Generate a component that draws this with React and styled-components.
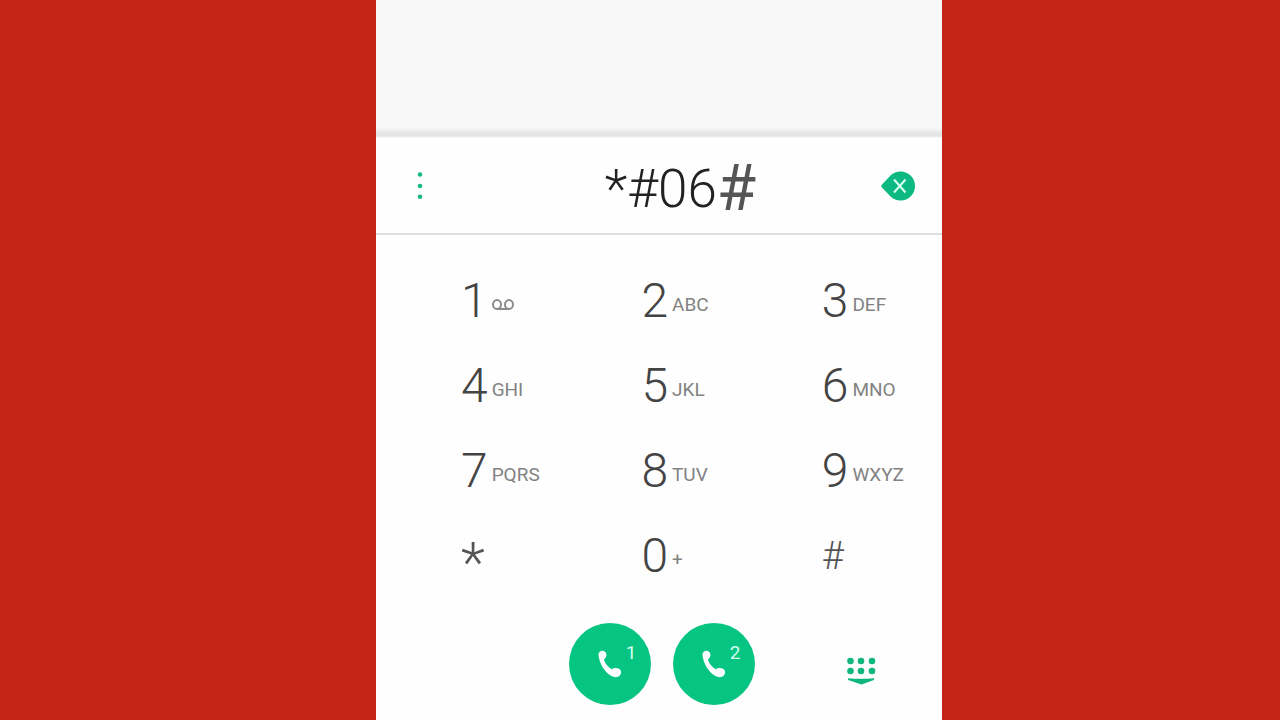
import React from "react";
import styled, { createGlobalStyle } from "styled-components";

const GlobalStyle = createGlobalStyle`
  * { box-sizing: border-box; }
  body { margin: 0; background: #c42517; font-family: Roboto, "Liberation Sans", sans-serif; }
  button { border: 0; padding: 0; background: none; font: inherit; color: inherit; cursor: pointer; }
`;

const Page = styled.div`
  display: grid;
  grid-template-columns: 376fr 566fr 338fr;
  min-height: 100vh;
`;

const Phone = styled.main`
  grid-column: 2;
  display: flex;
  flex-direction: column;
  background: #fefefe;
`;

const EmptyPanel = styled.div`
  height: 138px;
  background: linear-gradient(#f8f8f8 0 128px, #e8e8e8 132px, #e4e4e4 136px, #fefefe 138px);
`;

const NumberBar = styled.div`
  display: grid;
  grid-template-columns: 32px 1fr 36px;
  align-items: center;
  height: 97px;
  padding: 0 26px 0 28px;
  border-bottom: 2px solid #dedede;
`;

const IconButton = styled.button`
  display: flex;
  align-items: center;
  justify-content: center;
  height: 36px;
`;

const Dialed = styled.output`
  display: flex;
  align-items: center;
  justify-content: center;
  padding-left: 45px;
  padding-top: 6px;
  font-size: 53px;
  font-weight: 300;
  line-height: 60px;
  color: #222;
`;

const LastDigit = styled.span`
  font-size: 64px;
  font-weight: 400;
  line-height: 64px;
  color: #555;
`;

const Keypad = styled.div`
  display: grid;
  grid-template-columns: 3fr 3fr 2fr;
  grid-auto-rows: 85px;
  padding: 23px 0 0 85px;
`;

const Key = styled.button`
  display: flex;
  align-items: center;
  gap: 4px;
  text-align: left;
`;

const digitSizes = { "*": 56, "#": 38 };

const Digit = styled.span`
  padding-top: ${({ $char }) => ($char === "*" ? 14 : 0)}px;
  font-size: ${({ $char }) => digitSizes[$char] || 48}px;
  font-weight: 300;
  line-height: 56px;
  color: ${({ $char }) => (digitSizes[$char] ? "#555" : "#444")};
`;

const Letters = styled.span`
  display: flex;
  padding-top: 8px;
  font-size: 19px;
  line-height: 24px;
  color: #828282;
`;

const Actions = styled.div`
  display: grid;
  grid-template-columns: 1fr auto 1fr;
  align-items: center;
  padding: 25px 0 15px;
`;

const Calls = styled.div`
  grid-column: 2;
  display: flex;
  gap: 22px;
  padding-left: 6px;
`;

const CallButton = styled.button`
  display: flex;
  align-items: center;
  justify-content: center;
  gap: 4px;
  width: 82px;
  height: 82px;
  padding-left: 14px;
  border-radius: 50%;
  background: #06c481;
  color: #d4ffee;
`;

const Sim = styled.span`
  padding-bottom: 22px;
  font-size: 19px;
  line-height: 22px;
`;

const HideButton = styled(IconButton)`
  justify-self: center;
  padding: 14px 0 0 24px;
`;

const keys = [
  ["1", "voicemail"], ["2", "ABC"], ["3", "DEF"],
  ["4", "GHI"], ["5", "JKL"], ["6", "MNO"],
  ["7", "PQRS"], ["8", "TUV"], ["9", "WXYZ"],
  ["*", ""], ["0", "+"], ["#", ""],
];

const Voicemail = () => (
  <svg width="23" height="24" viewBox="0 0 23 24" fill="none" stroke="#8a8a8a" strokeWidth="2" aria-hidden="true">
    <ellipse cx="5" cy="11.500" rx="4" ry="4.500" />
    <ellipse cx="17" cy="11.500" rx="4" ry="4.500" />
    <path d="M5 16H17" />
  </svg>
);

const Handset = () => (
  <svg width="24" height="28" viewBox="0 0 24 28" aria-hidden="true">
    <path fill="#fff" d="M2 1.500C4-.1 7.300.8 8.200 3.500C9 6.200 7.400 8.300 6 9.300C6.600 13 10 17 13.700 19.200C15.500 18 18.500 17.400 21 18.800C23.500 20.300 23.800 23 22 25.200C19.500 28 16 27.400 13 25.800C7 22 2.200 15 .8 7C.2 4.500.5 2.800 2 1.500Z" />
  </svg>
);

export default function App() {
  return (
    <Page>
      <GlobalStyle />
      <Phone>
        <EmptyPanel />
        <NumberBar>
          <IconButton aria-label="More options">
            <svg width="8" height="28" viewBox="0 0 8 28" fill="#16b982">
              <circle cx="4" cy="2.500" r="2.300" />
              <circle cx="4" cy="14" r="2.300" />
              <circle cx="4" cy="24.800" r="2.300" />
            </svg>
          </IconButton>
          <Dialed aria-label="Dialed number">*#06<LastDigit>#</LastDigit></Dialed>
          <IconButton aria-label="Delete">
            <svg width="36" height="30" viewBox="0 0 36 30">
              <path fill="#0bb981" d="M2 13.500L10.500 4.500A14.500 14.500 0 1 1 10.500 25.500L2 16.500Q.5 15 2 13.500Z" />
              <path d="M14 8.500L25.500 21.500M25.500 8.500L14 21.500" stroke="#d8fff2" strokeWidth="2" />
            </svg>
          </IconButton>
        </NumberBar>
        <Keypad>
          {keys.map(([digit, letters]) => (
            <Key key={digit}>
              <Digit $char={digit}>{digit}</Digit>
              {letters && (
                <Letters>{letters === "voicemail" ? <Voicemail /> : letters}</Letters>
              )}
            </Key>
          ))}
        </Keypad>
        <Actions>
          <Calls>
            {[1, 2].map((sim) => (
              <CallButton key={sim} aria-label={`Call with SIM ${sim}`}>
                <Handset />
                <Sim>{sim}</Sim>
              </CallButton>
            ))}
          </Calls>
          <HideButton aria-label="Hide keypad">
            <svg width="30" height="28" viewBox="0 0 30 28" fill="#10b77d">
              <circle cx="4.500" cy="4" r="3.300" />
              <circle cx="15" cy="4" r="3.300" />
              <circle cx="26" cy="4" r="3.300" />
              <circle cx="4.500" cy="14" r="3.300" />
              <circle cx="15" cy="14" r="3.300" />
              <circle cx="26" cy="14" r="3.300" />
              <path d="M2 21.200Q15 22.300 28 21.200V23L15.500 27.500L2 23Z" />
            </svg>
          </HideButton>
        </Actions>
      </Phone>
    </Page>
  );
}
